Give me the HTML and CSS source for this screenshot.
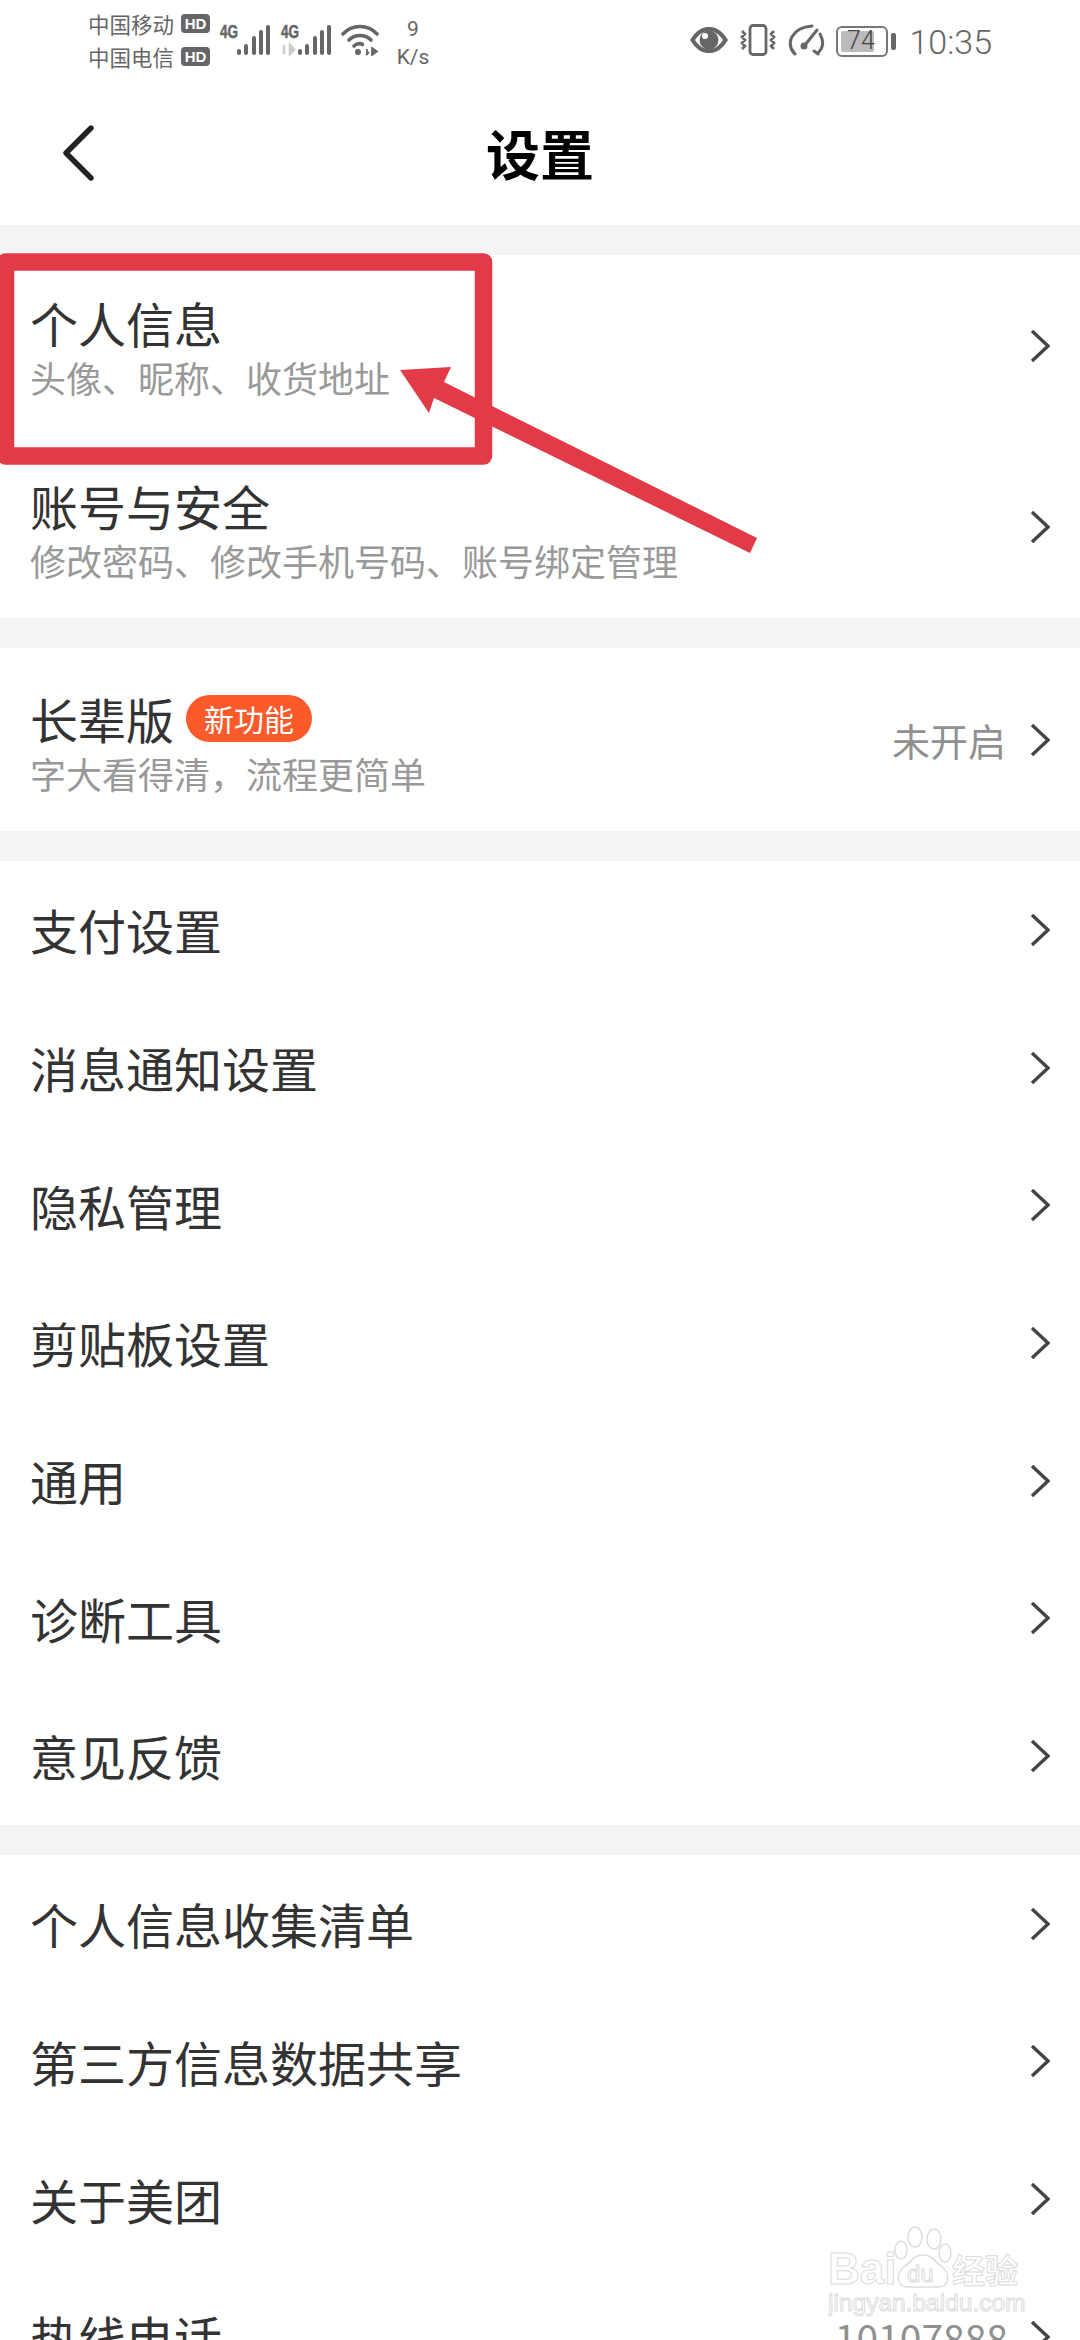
FILE: index.html
```html
<!DOCTYPE html>
<html lang="zh-CN">

<head>
  <meta charset="UTF-8">
  <meta name="viewport" content="width=device-width, initial-scale=1.0">
  <title>设置</title>
  <link rel="stylesheet" href="styles.css">
</head>

<body>
  <svg width="0" height="0" class="defs">
    <symbol id="chev" viewBox="0 0 20 34">
      <path d="M2 2 L18 17 L2 32" fill="none" stroke="#444" stroke-width="3.400" />
    </symbol>
  </svg>

  <div class="status">
    <div class="carriers">
      <div class="carrier">中国移动<span class="hd">HD</span></div>
      <div class="carrier">中国电信<span class="hd">HD</span></div>
    </div>
    <svg class="signal" width="110" height="32" viewBox="0 0 110 32">
      <text class="net" x="0" y="14" textLength="18" lengthAdjust="spacingAndGlyphs">4G</text>
      <g fill="#666">
        <rect x="17" y="25" width="4" height="6" rx="2" />
        <rect x="24" y="20" width="4" height="11" rx="2" />
        <rect x="32" y="12" width="4" height="19" rx="2" />
        <rect x="39" y="6" width="4" height="25" rx="2" />
        <rect x="46" y="1" width="4" height="30" rx="2" />
      </g>
      <text class="net" x="61" y="14" textLength="18" lengthAdjust="spacingAndGlyphs">4G</text>
      <path d="M64 21 v9 M70 21 v9 l4 -4.500 z" stroke="#ccc" stroke-width="2.500" fill="#ccc" />
      <g fill="#666">
        <rect x="78" y="25" width="4" height="6" rx="2" />
        <rect x="85" y="20" width="4" height="11" rx="2" />
        <rect x="93" y="12" width="4" height="19" rx="2" />
        <rect x="100" y="6" width="4" height="25" rx="2" />
        <rect x="107" y="1" width="4" height="30" rx="2" />
      </g>
    </svg>
    <svg class="wifi" width="38" height="32" viewBox="0 0 38 32">
      <g fill="none" stroke="#666" stroke-width="3.600" stroke-linecap="round">
        <path d="M2 10 C11 0 27 0 36 10" />
        <path d="M8 16 C14 10 24 10 30 16" />
        <path d="M13 22 C15.500 19.500 19.500 19 21.500 20.500" />
      </g>
      <circle cx="17" cy="28" r="3" fill="#666" />
      <path d="M26 25 v6 M28 28 l-3 3 M31 24 v7 l5 -3.500 z" stroke="#666" stroke-width="1.800" fill="#666" />
    </svg>
    <div class="speed"><span>9</span><span>K/s</span></div>

    <div class="status-right">
      <svg class="eye" width="40" height="28" viewBox="0 0 40 28">
        <path d="M1 14 C8 3 14 1 20 1 C26 1 32 3 39 14 C32 25 26 27 20 27 C14 27 8 25 1 14 Z" fill="#666" />
        <path d="M6 14 C11 7 15 5 20 5 C25 5 29 7 34 14 C29 21 25 23 20 23 C15 23 11 21 6 14 Z" fill="#fff" />
        <circle cx="20" cy="14" r="9.500" fill="#666" />
        <circle cx="16" cy="10" r="3" fill="#fff" />
      </svg>
      <svg class="vibrate" width="38" height="32" viewBox="0 0 38 32">
        <rect x="11" y="1.500" width="16" height="29" rx="3" fill="none" stroke="#666" stroke-width="2.800" />
        <path d="M3 7 l3 3 l-3 3 l3 3 l-3 3 l3 3 l-3 3 M35 7 l-3 3 l3 3 l-3 3 l3 3 l-3 3 l3 3" fill="none" stroke="#666" stroke-width="2.600" />
      </svg>
      <svg class="meter" width="38" height="32" viewBox="0 0 38 32">
        <g fill="none" stroke="#666" stroke-width="3" stroke-linecap="round">
          <path d="M7 29 C-1 19 4 4 25 2" />
          <path d="M33 10 C37 17 36 24 31 29" />
          <path d="M5 26 l3 4 M27 27 l4 3" />
          <path d="M18 21 L30 6" />
        </g>
        <circle cx="17" cy="22" r="3.500" fill="#666" />
      </svg>
      <div class="battery">
        <div class="cell"><div class="level"></div><span class="pct">74</span></div>
        <div class="nub"></div>
      </div>
      <span class="clock">10:35</span>
    </div>
  </div>

  <div class="nav">
    <svg class="back" width="34" height="56" viewBox="0 0 34 56">
      <path d="M29 3 L4 28 L29 53" fill="none" stroke="#222" stroke-width="5.400" stroke-linecap="round" stroke-linejoin="round" />
    </svg>
    <div class="nav-title">设置</div>
  </div>

  <div class="gap"></div>
  <div class="row tall first">
    <div class="text">
      <div class="title">个人信息</div>
      <div class="sub">头像、昵称、收货地址</div>
    </div>
    <svg class="chevron"><use href="#chev" /></svg>
  </div>
  <div class="row tall">
    <div class="text">
      <div class="title">账号与安全</div>
      <div class="sub">修改密码、修改手机号码、账号绑定管理</div>
    </div>
    <svg class="chevron"><use href="#chev" /></svg>
  </div>

  <div class="gap"></div>
  <div class="row tall elder">
    <div class="text">
      <div class="title">长辈版<span class="badge">新功能</span></div>
      <div class="sub">字大看得清，流程更简单</div>
    </div>
    <span class="value">未开启</span>
    <svg class="chevron"><use href="#chev" /></svg>
  </div>

  <div class="gap"></div>
  <div class="row"><div class="title">支付设置</div><svg class="chevron"><use href="#chev" /></svg></div>
  <div class="row"><div class="title">消息通知设置</div><svg class="chevron"><use href="#chev" /></svg></div>
  <div class="row"><div class="title">隐私管理</div><svg class="chevron"><use href="#chev" /></svg></div>
  <div class="row"><div class="title">剪贴板设置</div><svg class="chevron"><use href="#chev" /></svg></div>
  <div class="row"><div class="title">通用</div><svg class="chevron"><use href="#chev" /></svg></div>
  <div class="row"><div class="title">诊断工具</div><svg class="chevron"><use href="#chev" /></svg></div>
  <div class="row"><div class="title">意见反馈</div><svg class="chevron"><use href="#chev" /></svg></div>

  <div class="gap"></div>
  <div class="row"><div class="title">个人信息收集清单</div><svg class="chevron"><use href="#chev" /></svg></div>
  <div class="row"><div class="title">第三方信息数据共享</div><svg class="chevron"><use href="#chev" /></svg></div>
  <div class="row"><div class="title">关于美团</div><svg class="chevron"><use href="#chev" /></svg></div>
  <div class="row">
    <div class="title">热线电话</div>
    <span class="value phone">10107888</span>
    <svg class="chevron"><use href="#chev" /></svg>
  </div>

  <!-- 红框和箭头标注 -->
  <svg class="mark" width="800" height="600" viewBox="0 0 800 600">
    <rect x="5.500" y="262" width="478" height="194" fill="none" stroke="#e33a48" stroke-width="17.500" stroke-linejoin="round" />
    <polygon points="400,370 451,367 444,382 757,538 750,553 434,398 429,413" fill="#e33a48" />
  </svg>

  <!-- 水印 -->
  <svg class="watermark" width="200" height="100" viewBox="0 0 200 100">
    <g class="wm-line">
      <ellipse cx="87" cy="12" rx="7" ry="10" />
      <ellipse cx="106" cy="14" rx="7" ry="10" />
      <ellipse cx="73" cy="25" rx="6" ry="9" />
      <ellipse cx="117" cy="28" rx="6" ry="9" />
      <path d="M95 30 C85 30 82 38 76 42 C68 48 68 62 80 62 C88 62 102 62 110 62 C122 62 122 48 114 42 C108 38 105 30 95 30 Z" />
    </g>
    <text class="wm-text wm-logo" x="0" y="59">Bai</text>
    <text class="wm-text wm-du" x="79" y="57">du</text>
    <text class="wm-text wm-cjk" x="124" y="58">经验</text>
    <text class="wm-text wm-url" x="0" y="86">jingyan.baidu.com</text>
  </svg>
</body>

</html>
```

FILE: styles.css
```css
html, body {
  margin: 0;
  padding: 0;
  background-color: #fff;
}

body {
  position: relative;
  width: 1080px;
  height: 2340px;
  overflow: hidden;
  font-family: "Noto Sans CJK SC", "Noto Sans", sans-serif;
}

.defs {
  position: absolute;
}

/* 状态栏 */
.status {
  height: 81px;
  box-sizing: border-box;
  padding: 7px 88px 0 88px;
  display: flex;
  color: #666;
}

.carriers {
  width: 122px;
}

.carrier {
  display: flex;
  align-items: center;
  height: 33px;
  font-size: 21.500px;
  line-height: 33px;
}

.hd {
  margin-left: 7px;
  width: 29px;
  height: 19px;
  border-radius: 4px;
  background-color: #666;
  color: #fff;
  font-family: "Liberation Sans", sans-serif;
  font-weight: bold;
  font-size: 15px;
  line-height: 19px;
  text-align: center;
}

.signal {
  margin: 17px 0 0 10px;
  overflow: visible;
}

.net {
  font-family: "Liberation Sans", sans-serif;
  font-weight: bold;
  font-size: 18px;
  fill: #666;
  stroke: #666;
  stroke-width: 0.500;
}

.wifi {
  margin: 17px 0 0 11px;
}

.speed {
  width: 34px;
  margin: 8px 0 0 17px;
  display: flex;
  flex-direction: column;
  align-items: center;
  font-family: Roboto, sans-serif;
  font-size: 21px;
  line-height: 28px;
}

.status-right {
  margin-left: auto;
  display: flex;
  align-items: flex-start;
}

.eye {
  margin-top: 19px;
}

.vibrate {
  margin: 17px 0 0 10px;
}

.meter {
  margin: 17px 0 0 10px;
}

.battery {
  margin: 19px 0 0 11px;
  display: flex;
  align-items: center;
}

.cell {
  position: relative;
  width: 52px;
  height: 31px;
  box-sizing: border-box;
  border: 2.500px solid #777;
  border-radius: 6px;
  padding: 3px;
}

.level {
  width: 33px;
  height: 100%;
  background-color: #bbb;
  border-radius: 2px;
}

.pct {
  position: absolute;
  left: 0;
  right: 3px;
  top: 0;
  text-align: center;
  font-family: Roboto, sans-serif;
  font-weight: 300;
  font-size: 25px;
  line-height: 26px;
  color: #444;
}

.nub {
  margin-left: 3px;
  width: 5px;
  height: 17px;
  border-radius: 2px;
  background-color: #666;
}

.clock {
  margin: 15px 0 0 13px;
  font-family: Roboto, sans-serif;
  font-weight: 300;
  font-size: 34px;
  line-height: 40px;
}

/* 标题栏 */
.nav {
  position: relative;
  height: 144px;
  display: flex;
  align-items: center;
  justify-content: center;
}

.back {
  position: absolute;
  left: 62px;
  top: 44px;
}

.nav-title {
  font-size: 54px;
  font-weight: bold;
  color: #000;
  line-height: 60px;
}

/* 列表 */
.gap {
  height: 30px;
  background-color: #f4f4f4;
}

.row {
  height: 137.700px;
  box-sizing: border-box;
  padding: 0 30px 0 30px;
  display: flex;
  align-items: center;
}

.row.tall {
  height: 181.500px;
}

.row.elder {
  height: 183px;
}

.text {
  padding-top: 12px;
  margin-right: auto;
}

.first .text {
  padding-top: 8px;
}

.title {
  display: flex;
  align-items: center;
  font-size: 48px;
  line-height: 55px;
  color: #333;
}

.row .title {
  margin-right: auto;
}

.sub {
  font-size: 36px;
  line-height: 55px;
  color: #999;
}

.badge {
  margin-left: 12px;
  padding: 0 18px;
  height: 47px;
  border-radius: 24px;
  background-color: #fd5a2b;
  color: #fff;
  font-size: 30px;
  line-height: 47px;
}

.value {
  font-size: 38px;
  color: #909090;
  margin-right: 24px;
}

.phone {
  font-size: 39px;
  margin-right: 22px;
}

.chevron {
  width: 20px;
  height: 34px;
  flex: none;
}

/* 标注 */
.mark {
  position: absolute;
  left: 0;
  top: 0;
}

.watermark {
  position: absolute;
  left: 828px;
  top: 2225px;
}

.wm-line {
  fill: #fff;
  stroke: #ddd;
  stroke-width: 1.500;
}

.wm-text {
  fill: #fff;
  stroke: #dcdcdc;
  stroke-width: 1;
}

.wm-logo {
  font-family: "Liberation Sans", sans-serif;
  font-weight: bold;
  font-size: 44px;
}

.wm-du {
  font-family: "Liberation Sans", sans-serif;
  font-size: 24px;
}

.wm-cjk {
  font-size: 33px;
  font-weight: bold;
}

.wm-url {
  font-family: "Liberation Sans", sans-serif;
  font-size: 24.500px;
}
```
